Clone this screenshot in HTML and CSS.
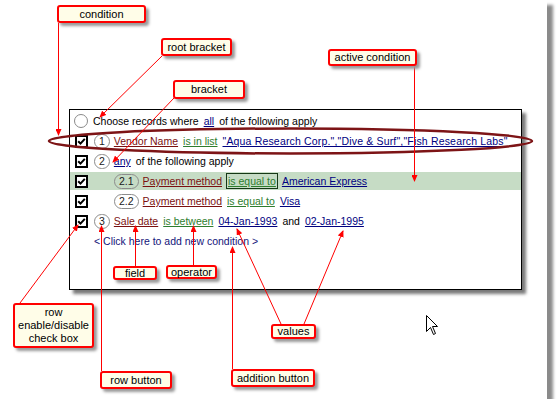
FILE: index.html
```html
<!DOCTYPE html>
<html>
<head>
<meta charset="utf-8">
<title>Filter editor</title>
<link rel="stylesheet" href="styles.css">
</head>
<body>
<div class="frame">
  <div class="panel">
    <div class="row">
      <span class="radio"></span>
      <span class="txt">Choose records where</span>
      <span class="val">all</span>
      <span class="txt">of the following apply</span>
    </div>
    <div class="row">
      <span class="chk"><svg width="13" height="13" viewBox="0 0 13 13"><rect x="1" y="1" width="11" height="11" fill="#fff" stroke="#000" stroke-width="2"/><path d="M3.2 6.2 L5.5 8.6 L9.8 3.8" fill="none" stroke="#000" stroke-width="2"/></svg></span>
      <span class="pill">1</span>
      <span class="fld">Vendor Name</span>
      <span class="op">is in list</span>
      <span class="val list">"Aqua Research Corp.","Dive &amp; Surf","Fish Research Labs"</span>
    </div>
    <div class="row">
      <span class="chk"><svg width="13" height="13" viewBox="0 0 13 13"><rect x="1" y="1" width="11" height="11" fill="#fff" stroke="#000" stroke-width="2"/><path d="M3.2 6.2 L5.5 8.6 L9.8 3.8" fill="none" stroke="#000" stroke-width="2"/></svg></span>
      <span class="pill">2</span>
      <span class="val">any</span>
      <span class="txt">of the following apply</span>
    </div>
    <div class="row active">
      <span class="chk"><svg width="13" height="13" viewBox="0 0 13 13"><rect x="1" y="1" width="11" height="11" fill="#fff" stroke="#000" stroke-width="2"/><path d="M3.2 6.2 L5.5 8.6 L9.8 3.8" fill="none" stroke="#000" stroke-width="2"/></svg></span>
      <span class="pill sub">2.1</span>
      <span class="fld">Payment method</span>
      <span class="op focus">is equal to</span>
      <span class="val">American Express</span>
    </div>
    <div class="row">
      <span class="chk"><svg width="13" height="13" viewBox="0 0 13 13"><rect x="1" y="1" width="11" height="11" fill="#fff" stroke="#000" stroke-width="2"/><path d="M3.2 6.2 L5.5 8.6 L9.8 3.8" fill="none" stroke="#000" stroke-width="2"/></svg></span>
      <span class="pill sub">2.2</span>
      <span class="fld">Payment method</span>
      <span class="op">is equal to</span>
      <span class="val">Visa</span>
    </div>
    <div class="row">
      <span class="chk"><svg width="13" height="13" viewBox="0 0 13 13"><rect x="1" y="1" width="11" height="11" fill="#fff" stroke="#000" stroke-width="2"/><path d="M3.2 6.2 L5.5 8.6 L9.8 3.8" fill="none" stroke="#000" stroke-width="2"/></svg></span>
      <span class="pill">3</span>
      <span class="fld">Sale date</span>
      <span class="op">is between</span>
      <span class="val">04-Jan-1993</span>
      <span class="txt">and</span>
      <span class="val">02-Jan-1995</span>
    </div>
    <div class="row add">
      <span class="addlink">&lt; Click here to add new condition &gt;</span>
    </div>
  </div>

  <svg class="overlay" width="559" height="409" viewBox="0 0 559 409">
    <defs>
      <marker id="ah" markerWidth="7" markerHeight="6" refX="6" refY="3" orient="auto" markerUnits="userSpaceOnUse">
        <path d="M0,0 L7,3 L0,6 z" fill="#ff0000"/>
      </marker>
    </defs>
    <ellipse cx="290.5" cy="141" rx="241.5" ry="12.5" fill="none" stroke="#7d1416" stroke-width="2.5"/>
    <g stroke="#ff0000" stroke-width="1" fill="none" marker-end="url(#ah)">
      <line x1="58.5" y1="23" x2="58.5" y2="135"/>
      <line x1="162" y1="56" x2="100" y2="117"/>
      <line x1="174" y1="98" x2="113" y2="162"/>
      <line x1="414.5" y1="66" x2="414.5" y2="181"/>
      <line x1="135.5" y1="266" x2="135.5" y2="226"/>
      <line x1="193.5" y1="265" x2="193.5" y2="226"/>
      <line x1="101.5" y1="371" x2="101.5" y2="226"/>
      <line x1="232.5" y1="369" x2="232.5" y2="247"/>
      <line x1="281" y1="324" x2="237" y2="229"/>
      <line x1="304" y1="324" x2="343" y2="231"/>
      <line x1="20" y1="303" x2="78" y2="225"/>
    </g>
  </svg>

  <div class="callout c-condition">condition</div>
  <div class="callout c-root">root bracket</div>
  <div class="callout c-bracket">bracket</div>
  <div class="callout c-active">active condition</div>
  <div class="callout small c-field">field</div>
  <div class="callout small c-operator">operator</div>
  <div class="callout c-rowbtn">row button</div>
  <div class="callout c-addbtn">addition button</div>
  <div class="callout small c-values">values</div>
  <div class="callout c-enable">row<br>enable/disable<br>check box</div>

  <svg class="cursor" width="13" height="21" viewBox="0 0 13 21">
    <path d="M0.5 0.5 L0.5 16.5 L4.5 12.5 L7.5 19.5 L9.5 18.5 L6.5 11.5 L11.5 11.5 Z" fill="#fff" stroke="#000" stroke-width="1"/>
  </svg>
</div>
</body>
</html>
```

FILE: styles.css
```css
html, body {
  margin: 0;
  padding: 0;
  background: #fff;
}

body {
  font-family: "Liberation Sans", Arial, sans-serif;
  color: #000;
}

.frame {
  position: relative;
  width: 547px;
  height: 399px;
  box-sizing: border-box;
  padding-top: 109px;
  background: #fff;
  box-shadow: 6px 5px 3px #8a8a8a;
}

.panel {
  margin-left: 69px;
  width: 453px;
  height: 181px;
  box-sizing: border-box;
  border: 1px solid #000;
  padding-top: 1px;
  background: #fff;
  box-shadow: 4px 4px 3px #7a7a7a;
}

.row {
  display: flex;
  align-items: center;
  gap: 5px;
  height: 20px;
  padding-left: 5px;
  font-size: 10.5px;
  white-space: nowrap;
}

.row.active {
  height: 18px;
  margin: 1px 0;
  background: #c6dcc5;
}

.row.add {
  padding-left: 24px;
}

.radio {
  width: 14px;
  height: 14px;
  margin-left: -1px;
  border: 1px solid #8a8a8a;
  border-radius: 50%;
  background: #fff;
  box-sizing: border-box;
}

.chk {
  display: flex;
  width: 13px;
  height: 13px;
  margin-right: 1px;
}

.pill {
  height: 15px;
  box-sizing: border-box;
  padding: 0 4px;
  border: 1px solid #8c8c8c;
  border-radius: 8px;
  line-height: 13px;
  color: #1a1a1a;
  margin-right: -1px;
}

.pill.sub {
  margin-left: 20px;
}

.fld {
  color: #7a1010;
  text-decoration: underline;
}

.op {
  color: #2e7d2e;
  text-decoration: underline;
}

.op.focus {
  outline: 1px solid #163816;
  outline-offset: 1px;
  margin: 0 1px;
}

.val {
  color: #000080;
  text-decoration: underline;
}

.val.list {
  letter-spacing: 0.17px;
}

.addlink {
  color: #14147a;
}

.overlay {
  position: absolute;
  left: 0;
  top: 0;
  pointer-events: none;
}

.callout {
  position: absolute;
  box-sizing: border-box;
  border: 2px solid #ff0000;
  border-radius: 3px;
  background: #fffde8;
  box-shadow: 3px 3px 3px #9a9a9a;
  font-size: 11px;
  line-height: 14px;
  text-align: center;
  white-space: nowrap;
}

.callout.small {
  line-height: 10px;
}

.c-condition { left: 57px; top: 5px; width: 89px; height: 18px; }
.c-root { left: 161px; top: 38px; width: 71px; height: 18px; }
.c-bracket { left: 173px; top: 80px; width: 72px; height: 19px; line-height: 15px; }
.c-active { left: 328px; top: 49px; width: 89px; height: 17px; line-height: 13px; }
.c-field { left: 113px; top: 266px; width: 44px; height: 14px; }
.c-operator { left: 166px; top: 265px; width: 51px; height: 14px; }
.c-rowbtn { left: 100px; top: 371px; width: 72px; height: 18px; }
.c-addbtn { left: 231px; top: 369px; width: 84px; height: 18px; }
.c-values { left: 271px; top: 324px; width: 45px; height: 15px; line-height: 11px; }
.c-enable { left: 13px; top: 303px; width: 81px; height: 45px; line-height: 13px; padding-top: 1px; }

.cursor {
  position: absolute;
  left: 426px;
  top: 315px;
}
```
